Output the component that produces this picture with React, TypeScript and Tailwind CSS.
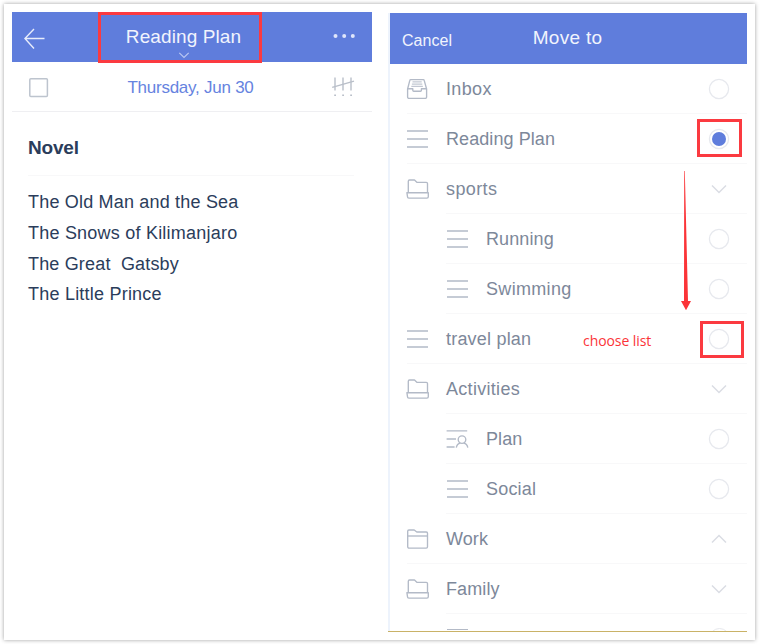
import type { ReactNode } from 'react';

type IconName = 'inbox' | 'list' | 'folder' | 'folderOpen' | 'shared';
type Control = 'radio' | 'selected' | 'down' | 'up';

interface Row {
  label: string;
  icon: IconName;
  control: Control;
  child?: boolean;
  indentLine?: boolean;
  tracking: string;
}

const rows: Row[] = [
  { label: 'Inbox', icon: 'inbox', control: 'radio', tracking: 'tracking-[0.35px]' },
  { label: 'Reading Plan', icon: 'list', control: 'selected', tracking: 'tracking-[0.08px]' },
  { label: 'sports', icon: 'folder', control: 'down', indentLine: true, tracking: 'tracking-[0.4px]' },
  { label: 'Running', icon: 'list', control: 'radio', child: true, indentLine: true, tracking: 'tracking-[0.1px]' },
  { label: 'Swimming', icon: 'list', control: 'radio', child: true, indentLine: true, tracking: 'tracking-[0.32px]' },
  { label: 'travel plan', icon: 'list', control: 'radio', tracking: 'tracking-[0.2px]' },
  { label: 'Activities', icon: 'folder', control: 'down', indentLine: true, tracking: 'tracking-[0.3px]' },
  { label: 'Plan', icon: 'shared', control: 'radio', child: true, indentLine: true, tracking: 'tracking-[0.1px]' },
  { label: 'Social', icon: 'list', control: 'radio', child: true, indentLine: true, tracking: 'tracking-[0.2px]' },
  { label: 'Work', icon: 'folderOpen', control: 'up', tracking: 'tracking-[0.1px]' },
  { label: 'Family', icon: 'folder', control: 'down', indentLine: true, tracking: 'tracking-[0.1px]' },
];

const iconPaths: Record<IconName, ReactNode> = {
  inbox: (
    <>
      <path d="M4.800 2.600h12.400a1 1 0 0 1 1 .8L20.600 12v8a1.400 1.400 0 0 1-1.400 1.400H3a1.400 1.400 0 0 1-1.400-1.400v-8l2.200-8.600a1 1 0 0 1 1-.8z" />
      <path d="M1.600 11.700h5.200v1.600a.9.9 0 0 0 .9.9h6.800a.9.9 0 0 0 .9-.9v-1.600h5.200" />
      <path d="M6.500 4.900h9.200M5.900 7.100h10.400M5.300 9.300h11.600" strokeWidth="1" />
    </>
  ),
  list: <path d="M1 4h21M1 12h21M1 20h21" />,
  folder: (
    <>
      <path d="M2.300 15V4.200A1.200 1.200 0 0 1 3.500 3h5l2.600 2.400h9.200a1.200 1.200 0 0 1 1.200 1.200V15" />
      <path d="M.9 15.700h21.400v4a1.400 1.400 0 0 1-1.400 1.400H2.900a1.400 1.400 0 0 1-1.400-1.400z" />
    </>
  ),
  folderOpen: (
    <>
      <path d="M1.700 19.800V4.200a1.200 1.200 0 0 1 1.200-1.200h5.300l2.600 2h9.500a1.200 1.200 0 0 1 1.200 1.200v13.600a1.300 1.300 0 0 1-1.300 1.300H3a1.300 1.300 0 0 1-1.300-1.300z" />
      <path d="M1.700 9h19.800" />
    </>
  ),
  shared: (
    <>
      <path d="M.6 3.800h20.600M.6 12h9.400M.6 20h8" />
      <circle cx="16" cy="12.600" r="3.800" />
      <path d="M10.300 20.700c.5-2.700 1.900-4.100 4-4.500M17.700 16.200c2.200.4 3.600 1.800 4.100 4.500" />
    </>
  ),
};

function RowIcon({ name }: { name: IconName }) {
  return (
    <svg className="h-6 w-6 shrink-0" viewBox="0 0 24 24" fill="none" stroke="#b3bac7" strokeWidth="1.35" strokeLinejoin="round">
      {iconPaths[name]}
    </svg>
  );
}

function Chevron({ up = false }: { up?: boolean }) {
  return (
    <svg className="h-5 w-5" viewBox="0 0 20 20" fill="none" stroke="#dadde4" strokeWidth="1.5">
      <path d={up ? 'M2 13.500l7-7 7 7' : 'M2 6.500l7 7 7-7'} />
    </svg>
  );
}

function RowControl({ kind }: { kind: Control }) {
  if (kind === 'down' || kind === 'up') return <Chevron up={kind === 'up'} />;
  return (
    <svg className="h-[22px] w-[22px]" viewBox="0 0 22 22" fill="none">
      <circle cx="11" cy="11" r="9.600" stroke="#e7e9ee" strokeWidth="1.300" />
      {kind === 'selected' && <circle cx="11" cy="11" r="7" fill="#5f7ddc" />}
    </svg>
  );
}

function ListRow({ row }: { row: Row }) {
  return (
    <div className="flex h-[50px] shrink-0 flex-col">
      <div className={`flex h-[49px] items-center pr-[17px] ${row.child ? 'pl-[56px]' : 'pl-4'}`}>
        <RowIcon name={row.icon} />
        <span className={`ml-4 flex-1 whitespace-pre text-[18px] leading-6 text-[#7d889a] ${row.tracking}`}>{row.label}</span>
        <RowControl kind={row.control} />
      </div>
      <div className={`h-px bg-[#f8f8f9] ${row.indentLine ? 'ml-[56px]' : 'ml-[17px]'}`} />
    </div>
  );
}

function NotePanel() {
  return (
    <section className="mt-2 h-[619px] w-[360px] shrink-0">
      <header className="grid h-[50px] grid-cols-[86px_1fr_110px] items-center bg-[#5f7ddc] text-white">
        <svg className="ml-3 mt-[3px] h-6 w-[22px]" viewBox="0 0 22 24" fill="none" stroke="#e8edfb" strokeWidth="1.400">
          <path d="M10 2L.9 11.500l9.100 10M.9 11.500H20.500" />
        </svg>
        <div className="flex flex-col items-center pl-[7px] pt-[9px]">
          <span className="whitespace-nowrap text-[19px] leading-[23px] tracking-[0.1px] text-[#f1f4fd]">Reading Plan</span>
          <svg className="mt-1 h-[7px] w-[12px]" viewBox="0 0 12 7" fill="none" stroke="#b9c7f2" strokeWidth="1.200">
            <path d="M1.300.8L6 5.500 10.700.8" />
          </svg>
        </div>
        <svg className="ml-auto mr-4 mt-[-2px] h-[6px] w-[23px]" viewBox="0 0 23 6" fill="#dfe6fa">
          <circle cx="2.500" cy="3" r="2" />
          <circle cx="11.200" cy="3" r="2" />
          <circle cx="19.800" cy="3" r="2" />
        </svg>
      </header>
      <div className="flex h-[50px] items-center justify-between border-b border-[#efeff2] pl-[17px] pr-[17px]">
        <svg className="mt-[2px] h-[20px] w-[20px]" viewBox="0 0 20 20" fill="none" stroke="#bdc4ce" strokeWidth="1.500">
          <rect x=".8" y=".8" width="17.600" height="17.600" rx="1" />
        </svg>
        <span className="ml-[1px] mt-[3px] text-[17px] leading-6 tracking-[-0.25px] text-[#6683df]">Thursday, Jun 30</span>
        <svg className="mt-px h-[22px] w-6" viewBox="0 0 24 22" fill="none" stroke="#b9bfc9" strokeWidth="1.400">
          <path d="M4 1.500v13M12 1.500v13M20 1.500v13" />
          <path d="M1.200 11.400L23 5.200" />
          <path d="M3.200 19.300h1.800M11.200 19.300H13M19.200 19.300H21" strokeWidth="1.500" />
        </svg>
      </div>
      <article className="pl-4 pr-[18px] text-[18px] text-[#2b3d5b]">
        <h1 className="flex h-[64px] items-center border-b border-[#f8f8f9] pt-[9px] text-[19px] font-bold leading-6 tracking-[-0.2px]">Novel</h1>
        <div className="whitespace-pre pt-[11px] leading-[30.800px]">
          <p className="tracking-[0.19px]">The Old Man and the Sea</p>
          <p className="tracking-[0.22px]">The Snows of Kilimanjaro</p>
          <p className="tracking-[0.17px]">The Great  Gatsby</p>
          <p className="tracking-[0.22px]">The Little Prince</p>
        </div>
      </article>
    </section>
  );
}

function MovePanel() {
  return (
    <section className="ml-4 mt-[9px] flex h-[619px] w-[359px] shrink-0 flex-col overflow-hidden border-b border-[#c9b267]">
      <div className="min-h-0 flex-1 overflow-hidden border-l-2 border-[#edf3fc]">
        <header className="grid h-[51px] grid-cols-[1fr_auto_1fr] items-center bg-[#5f7ddc] pl-3 pr-[14px] text-[#f1f4fd]">
          <span className="mt-[4px] text-[16px] leading-6 tracking-[0.05px]">Cancel</span>
          <span className="-mt-px text-[19px] leading-6 tracking-[0.3px]">Move to</span>
          <span />
        </header>
        {rows.map((row) => (
          <ListRow key={row.label} row={row} />
        ))}
        <div className="flex items-start justify-between pl-[57px] pr-[17px] pt-[15px]">
          <i className="h-px w-[21px] bg-[#b3bac7]" />
          <i className="mt-[-1px] h-[21px] w-[21px] rounded-full border border-[#e6e8ed]" />
        </div>
      </div>
    </section>
  );
}

export default function App() {
  return (
    <main className="relative h-[644px] w-[760px] overflow-hidden bg-white p-1 font-['Liberation_Sans',Arial,sans-serif]">
      <div className="flex h-[636px] w-[751px] bg-white pl-2 shadow-[0_0_4px_rgba(0,0,0,0.38)]">
        <NotePanel />
        <MovePanel />
      </div>
      <div className="absolute left-[98px] top-[12px] h-[51px] w-[164px] border-3 border-[#fb3a40]" />
      <div className="absolute left-[697px] top-[119px] h-[38px] w-[45px] border-3 border-[#fb3a40]" />
      <div className="absolute left-[700px] top-[321px] h-[37px] w-[44px] border-3 border-[#fb3a40]" />
      <svg className="absolute left-[680px] top-[170px] h-[141px] w-[12px]" viewBox="0 0 12 141">
        <path d="M4.200 1h.6L8 131h3L6 140.300 1 131h3z" fill="#fb3438" />
      </svg>
      <span className="absolute left-[583px] top-[331px] whitespace-nowrap font-['Open_Sans',sans-serif] text-[14px] leading-5 tracking-[-0.08px] text-[#fb3438]">choose list</span>
    </main>
  );
}
